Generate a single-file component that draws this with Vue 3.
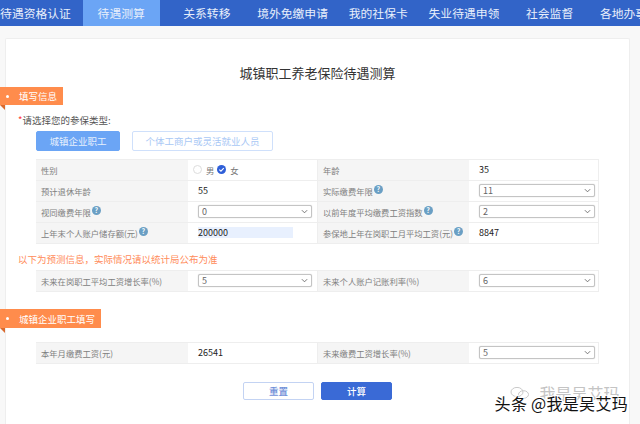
<script setup>
const navItems = ['待遇资格认证', '待遇测算', '关系转移', '境外免缴申请', '我的社保卡', '失业待遇申领', '社会监督', '各地办事大厅'];

const baseRows = [
  { label: '预计退休年龄', value: '55', rightLabel: '实际缴费年限', rightHelp: true, rightSelect: '11' },
  { label: '视同缴费年限', help: true, select: '0', rightLabel: '以前年度平均缴费工资指数', rightHelp: true, rightSelect: '2' },
  { label: '上年末个人账户储存额(元)', help: true, input: '200000', rightLabel: '参保地上年在岗职工月平均工资(元)', rightHelp: true, rightValue: '8847' },
];
</script>

<template>
  <div class="page">
    <nav class="nav">
      <a v-for="(item, i) in navItems" :key="item" class="nav-item" :class="{ active: i === 1 }">{{ item }}</a>
    </nav>

    <main class="card">
      <h1 class="title">城镇职工养老保险待遇测算</h1>

      <div class="ribbon"><i class="dot"></i>填写信息</div>

      <p class="type-label"><span class="star">*</span>请选择您的参保类型:</p>
      <div class="type-btns">
        <button class="type-btn on">城镇企业职工</button>
        <button class="type-btn wide">个体工商户或灵活就业人员</button>
      </div>

      <div class="grid first">
        <div class="lab">性别</div>
        <div class="val radios">
          <span class="radio"></span><span class="radio-text">男</span>
          <svg class="radio-on" viewBox="0 0 10 10" width="9" height="9">
            <circle cx="5" cy="5" r="5" fill="#2f5fd8" />
            <path d="M2.6 5.1 4.4 6.9 7.5 3.6" fill="none" stroke="#fff" stroke-width="1.2" />
          </svg>
          <span class="radio-text">女</span>
        </div>
        <div class="lab">年龄</div>
        <div class="val plain right">35</div>

        <template v-for="row in baseRows" :key="row.label">
          <div class="lab">{{ row.label }}<span v-if="row.help" class="help">?</span></div>
          <div class="val" :class="{ plain: row.value }">
            <template v-if="row.value">{{ row.value }}</template>
            <div v-else-if="row.select" class="sel">{{ row.select }}
              <svg class="chev" viewBox="0 0 8 5" width="7" height="5"><path d="M1 1 4 4 7 1" fill="none" stroke="#666" stroke-width="1" /></svg>
            </div>
            <div v-else class="filled">{{ row.input }}</div>
          </div>
          <div class="lab">{{ row.rightLabel }}<span v-if="row.rightHelp" class="help">?</span></div>
          <div class="val right" :class="{ plain: row.rightValue }">
            <template v-if="row.rightValue">{{ row.rightValue }}</template>
            <div v-else class="sel">{{ row.rightSelect }}
              <svg class="chev" viewBox="0 0 8 5" width="7" height="5"><path d="M1 1 4 4 7 1" fill="none" stroke="#666" stroke-width="1" /></svg>
            </div>
          </div>
        </template>
      </div>

      <p class="notice">以下为预测信息，实际情况请以统计局公布为准</p>

      <div class="grid second">
        <div class="lab">未来在岗职工平均工资增长率(%)</div>
        <div class="val"><div class="sel">5
          <svg class="chev" viewBox="0 0 8 5" width="7" height="5"><path d="M1 1 4 4 7 1" fill="none" stroke="#666" stroke-width="1" /></svg>
        </div></div>
        <div class="lab">未来个人账户记账利率(%)</div>
        <div class="val right"><div class="sel">6
          <svg class="chev" viewBox="0 0 8 5" width="7" height="5"><path d="M1 1 4 4 7 1" fill="none" stroke="#666" stroke-width="1" /></svg>
        </div></div>
      </div>

      <div class="ribbon long"><i class="dot"></i>城镇企业职工填写</div>

      <div class="grid third">
        <div class="lab">本年月缴费工资(元)</div>
        <div class="val plain">26541</div>
        <div class="lab">未来缴费工资增长率(%)</div>
        <div class="val right"><div class="sel">5
          <svg class="chev" viewBox="0 0 8 5" width="7" height="5"><path d="M1 1 4 4 7 1" fill="none" stroke="#666" stroke-width="1" /></svg>
        </div></div>
      </div>

      <div class="actions">
        <button class="act reset">重置</button>
        <button class="act calc">计算</button>
      </div>
    </main>

    <div class="mark">
      <div class="mark-back">
        <svg viewBox="0 0 20 12" width="20" height="12">
          <ellipse cx="7" cy="5" rx="6" ry="4.6" fill="none" stroke="#c9c9c9" />
          <ellipse cx="13.5" cy="7.5" rx="5" ry="3.8" fill="none" stroke="#c9c9c9" />
        </svg>
        <span>我是吴艾玛</span>
      </div>
      <div class="mark-front">头条 @我是吴艾玛</div>
    </div>
  </div>
</template>

<style scoped>
.page {
  position: relative;
  display: flex;
  flex-direction: column;
  height: 424px;
  overflow: hidden;
  background: #f8f8f8;
  font-family: "Noto Sans CJK SC", "Liberation Sans", sans-serif;
  font-size: 9.5px;
  color: #333;
}

.nav {
  display: flex;
  flex: none;
  gap: 8.7px;
  height: 26px;
  margin-left: -3px;
  overflow: hidden;
  background: #3264c8;
}

.nav-item {
  flex: none;
  width: 77px;
  line-height: 26px;
  font-size: 11.8px;
  color: #e8effb;
  text-align: center;
  white-space: nowrap;
}

.nav-item.active {
  background: #6ba5f5;
}

.card {
  flex: 1;
  margin: 12px 10px 0 5px;
  border: 1px solid #eee;
  border-bottom: 0;
  border-radius: 2px 2px 0 0;
  background: #fff;
}

.title {
  margin: 25px 0 5px;
  font-size: 13px;
  font-weight: 400;
  line-height: 18px;
  text-align: center;
  color: #333;
}

.ribbon {
  position: relative;
  display: flex;
  align-items: center;
  width: 63px;
  height: 18px;
  margin-left: -6px;
  background: #ff8c4c;
  color: #fff;
  font-size: 9.5px;
  white-space: nowrap;
}

.ribbon::after {
  content: "";
  position: absolute;
  left: 0;
  top: 100%;
  border-top: 5px solid #d9692d;
  border-left: 5px solid transparent;
}

.ribbon.long {
  width: 101px;
  height: 19px;
  margin-top: 17px;
}

.dot {
  flex: none;
  width: 3px;
  height: 3px;
  margin: 0 10px 0 6px;
  border-radius: 50%;
  background: #fff;
}

.type-label {
  margin: 8px 0 0 12px;
  line-height: 14px;
  color: #555;
}

.star {
  color: #f33;
}

.type-btns {
  display: flex;
  gap: 12px;
  margin: 4px 0 0 30px;
}

.type-btn {
  width: 84px;
  height: 20px;
  padding: 0;
  border: 1px solid #6ba5f5;
  border-radius: 2px;
  background: #6ba5f5;
  color: #e6f0fd;
  font: inherit;
}

.type-btn.wide {
  width: 141px;
  background: #fff;
  border-color: #cfe0fb;
  color: #a9c8f5;
}

.grid {
  display: grid;
  grid-template-columns: 152px 130px 151px 130px;
  grid-auto-rows: 21px;
  width: 563px;
  margin-left: 30px;
  border-bottom: 1px solid #eee;
}

.grid.first {
  margin-top: 8px;
}

.grid.second {
  margin-top: 4px;
}

.grid.third {
  margin-top: 14px;
}

.lab,
.val {
  display: flex;
  align-items: center;
  padding-bottom: 1px;
  border-top: 1px solid #eee;
  white-space: nowrap;
}

.lab {
  padding-left: 5px;
  background: #f5f5f5;
  color: #808080;
  font-size: 8.3px;
}

.val {
  padding-left: 10px;
  padding-right: 5px;
  border-right: 1px solid #eee;
  font-size: 9px;
}

.val.plain {
  color: #222;
}

.val.right {
  padding-right: 3px;
}

.help {
  display: inline-block;
  flex: none;
  width: 9px;
  height: 9px;
  margin: 0 0 3px 1px;
  border-radius: 50%;
  background: #6a9fc4;
  color: #fff;
  font-size: 7px;
  font-weight: 700;
  line-height: 9px;
  text-align: center;
}

.val.radios {
  padding-left: 5px;
}

.radio {
  flex: none;
  width: 7px;
  height: 7px;
  border: 1px solid #ddd;
  border-radius: 50%;
}

.radio-on {
  flex: none;
  margin-left: 3px;
}

.radio-text {
  margin-left: 4px;
  color: #777;
  font-size: 8.3px;
}

.sel {
  position: relative;
  flex: 1;
  height: 13px;
  padding-left: 3px;
  box-sizing: border-box;
  border: 1px solid #c4c4c4;
  border-radius: 2px;
  box-shadow: 0 0 1px #bbb;
  background: #fff;
  color: #666;
  line-height: 11px;
}

.chev {
  position: absolute;
  right: 3px;
  top: 3px;
}

.filled {
  width: 95px;
  height: 11px;
  background: #e8f0fe;
  color: #222;
  line-height: 11px;
}

.notice {
  margin: 8px 0 0 12px;
  line-height: 14px;
  font-size: 9.5px;
  color: #ff8c5a;
}

.actions {
  display: flex;
  justify-content: center;
  gap: 7px;
  margin-top: 18px;
}

.act {
  width: 71px;
  height: 18px;
  padding: 0;
  border-radius: 2px;
  font: inherit;
  font-weight: 500;
}

.reset {
  border: 1px solid #c3d3f3;
  background: #fff;
  color: #6f8fd8;
}

.calc {
  border: 1px solid #3a6ad6;
  background: #3a6ad6;
  color: #fff;
}

.mark {
  position: absolute;
  right: 12px;
  bottom: 11px;
}

.mark-back {
  position: absolute;
  left: 15px;
  top: -9px;
  display: flex;
  align-items: center;
  gap: 10px;
  font-size: 16px;
  line-height: 18px;
  color: #c4c4c4;
  white-space: nowrap;
}

.mark-front {
  position: relative;
  font-size: 16px;
  line-height: 20px;
  color: #111;
  white-space: nowrap;
  letter-spacing: 0.3px;
  text-shadow: 1px 1px 0 #fff, -1px -1px 0 #fff, 1px -1px 0 #fff, -1px 1px 0 #fff;
}
</style>
